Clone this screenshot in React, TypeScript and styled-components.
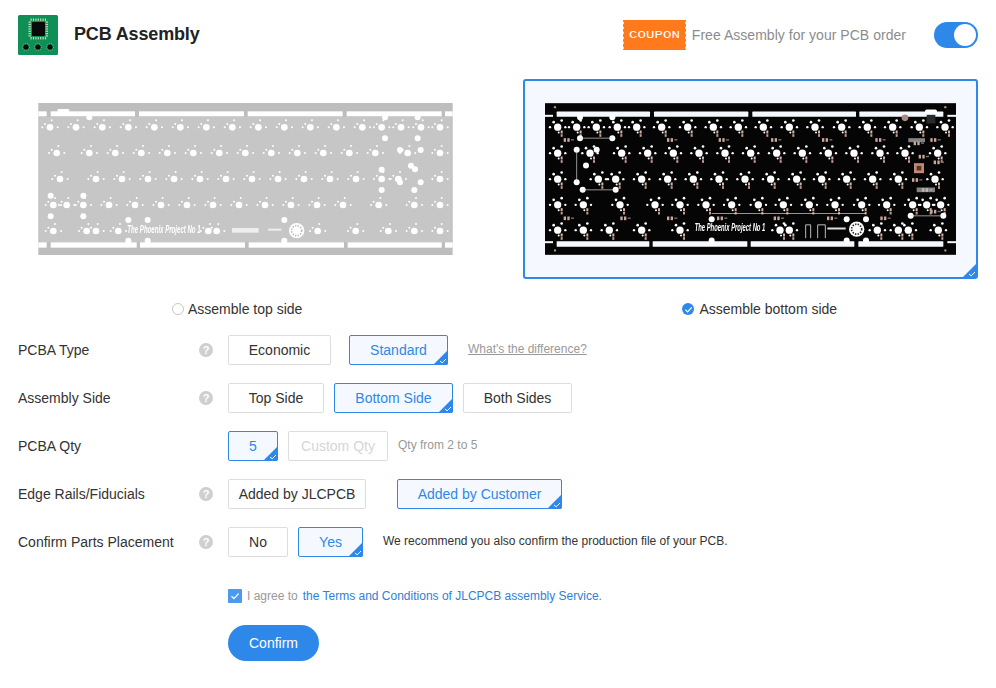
import styled, { createGlobalStyle } from 'styled-components'

const BLUE = '#2e88ea'

const GREY_KEYS: [number, number[]][] = [
  [110, [90, 168, 247, 325, 403, 481, 559, 637, 715, 793, 871, 949, 1027, 1085, 1143, 1203, 1260]],
  [187, [110, 208, 286, 364, 442, 520, 598, 676, 754, 832, 910, 988, 1066, 1163, 1260]],
  [265, [120, 228, 306, 384, 462, 540, 618, 696, 774, 852, 930, 1008, 1085, 1135, 1260]],
  [343, [100, 140, 190, 267, 345, 423, 501, 579, 657, 735, 813, 891, 969, 1076, 1183, 1260]],
  [421, [100, 200, 228, 295, 565, 590, 893, 1007, 1105, 1183, 1260]],
]

const GREY_HOLES = [
  [208, 80], [1095, 80], [1193, 80], [1095, 143], [1193, 143], [1140, 178], [1202, 178],
  [1173, 225], [1185, 236], [1085, 237], [1140, 275], [1202, 275], [1085, 298], [1183, 298],
  [92, 315], [190, 315], [92, 377], [190, 377], [325, 388], [383, 388], [793, 388],
  [325, 450], [383, 450], [793, 450],
]

const BLACK_KEYS: [number, number[]][] = [
  [157, [113, 170, 229, 292, 350, 425, 503, 580, 655, 730, 808, 885, 965, 1042, 1118, 1198, 1275]],
  [235, [113, 210, 305, 383, 460, 537, 615, 692, 770, 847, 925, 1002, 1080, 1155, 1253]],
  [313, [113, 235, 287, 365, 443, 520, 597, 675, 752, 830, 905, 980, 1058, 1135, 1245]],
  [390, [113, 190, 300, 405, 480, 558, 635, 715, 790, 868, 945, 1025, 1100, 1178, 1220, 1262]],
  [466, [113, 190, 268, 365, 480, 780, 808, 1072, 1135, 1165, 1255]],
]

const BLACK_HOLES = [
  [180, 127], [277, 127], [180, 190], [277, 190], [170, 225], [230, 225], [170, 322],
  [198, 272], [188, 345], [287, 345], [575, 433], [575, 497], [980, 433], [1038, 433],
  [980, 497], [1038, 497], [1172, 423], [1270, 423],
]

const TOP_SLOTS = [[110, 390], [402, 685], [697, 1008], [1018, 1270]]
const BOTTOM_SLOTS = [[110, 388], [398, 682], [692, 1003], [1015, 1270]]
const PCB_SPOTS = [
  [140, 195], [450, 195], [605, 195], [762, 195], [915, 195], [1075, 195], [1240, 195],
  [140, 430], [310, 430], [450, 430], [600, 430], [770, 430], [930, 430], [1090, 430],
  [1190, 205], [1205, 245], [1250, 262], [1185, 315], [1215, 345], [1240, 410],
]

const GlobalStyle = createGlobalStyle`
  html, body {
    margin: 0;
    background: #fff;
    font-family: "Liberation Sans", Arial, sans-serif;
  }
`

const Page = styled.div`
  width: 996px;
  height: 688px;
  box-sizing: border-box;
  padding: 15px 18px 0;
  overflow: hidden;
`

const Header = styled.header`
  display: flex;
  align-items: center;
  height: 40px;
`

const Title = styled.h1`
  margin: -2px 0 0 16px;
  font-size: 18px;
  font-weight: 700;
  letter-spacing: -0.15px;
  color: #222;
`

const Promo = styled.div`
  margin-left: auto;
  display: flex;
  align-items: center;
  gap: 5px;
  font-size: 14px;
  letter-spacing: 0.03px;
  color: #8c8c8c;
`

const Toggle = styled.span`
  display: flex;
  justify-content: flex-end;
  align-items: center;
  width: 44px;
  height: 26px;
  margin-left: 23px;
  padding: 0 2px;
  box-sizing: border-box;
  border-radius: 13px;
  background: ${BLUE};
`

const ToggleKnob = styled.span`
  width: 22px;
  height: 22px;
  border-radius: 50%;
  background: #fff;
`

const Panels = styled.div`
  display: flex;
  gap: 50px;
  margin-top: 24px;
`

const Panel = styled.div<{ $active?: boolean }>`
  position: relative;
  flex: 0 0 455px;
  height: 200px;
  box-sizing: border-box;
  display: flex;
  align-items: center;
  justify-content: center;
  border: 2px solid ${(p) => (p.$active ? BLUE : 'transparent')};
  border-radius: 3px;
  background: ${(p) => (p.$active ? '#f5f9ff' : 'transparent')};
`

const BoardArt = styled.svg`
  filter: blur(0.35px);
`

const SideChoices = styled.div`
  display: flex;
  margin-top: 21px;
  height: 18px;
`

const SideChoice = styled.label<{ $left: number }>`
  display: flex;
  align-items: center;
  gap: 4px;
  margin-left: ${(p) => p.$left}px;
  font-size: 14px;
  color: #333;
`

const RadioOff = styled.span`
  width: 10px;
  height: 10px;
  border: 1px solid #c8c8c8;
  border-radius: 50%;
  background: #fff;
`

const RadioOn = styled.span`
  display: flex;
  align-items: center;
  justify-content: center;
  width: 12px;
  height: 12px;
  margin-right: 1px;
  border-radius: 50%;
  background: ${BLUE};
`

const Form = styled.div`
  display: flex;
  flex-direction: column;
  gap: 18px;
  margin-top: 17px;
`

const Row = styled.div`
  display: flex;
  align-items: center;
  height: 30px;
`

const Label = styled.div`
  display: flex;
  justify-content: space-between;
  align-items: center;
  width: 195px;
  margin-right: 15px;
  font-size: 14px;
  color: #333;
`

const Help = styled.span`
  display: flex;
  align-items: center;
  justify-content: center;
  width: 14px;
  height: 14px;
  border-radius: 50%;
  background: #cfcfcf;
  color: #fff;
  font-size: 11px;
  font-weight: 700;
`

const Options = styled.div<{ $gap?: number }>`
  display: flex;
  gap: ${(p) => p.$gap ?? 10}px;
`

const Option = styled.span<{ $width: number; $active?: boolean; $disabled?: boolean }>`
  position: relative;
  width: ${(p) => p.$width}px;
  height: 30px;
  box-sizing: border-box;
  display: flex;
  align-items: center;
  justify-content: center;
  border: 1px solid ${(p) => (p.$active ? BLUE : '#ddd')};
  border-radius: 2px;
  font-size: 14px;
  color: ${(p) => (p.$active ? BLUE : p.$disabled ? '#d6d6d6' : '#333')};
  background: ${(p) => (p.$active ? '#f5f9ff' : '#fff')};
`

const CornerMark = styled.svg<{ $size: number }>`
  position: absolute;
  right: -1px;
  bottom: -1px;
  width: ${(p) => p.$size}px;
  height: ${(p) => p.$size}px;
`

const DifferenceLink = styled.a`
  margin: -3px 0 0 20px;
  font-size: 12px;
  color: #999;
  text-decoration: underline;
`

const Hint = styled.span<{ $dark?: boolean }>`
  margin: ${(p) => (p.$dark ? '-2px 0 0 20px' : '-3px 0 0 10px')};
  font-size: 12px;
  color: ${(p) => (p.$dark ? '#333' : '#999')};
`

const Agreement = styled.div`
  display: flex;
  align-items: center;
  margin: 32px 0 0 210px;
  height: 14px;
  font-size: 12px;
  color: #999;
`

const CheckBox = styled.span`
  display: flex;
  align-items: center;
  justify-content: center;
  width: 14px;
  height: 14px;
  margin-right: 5px;
  border-radius: 1px;
  background: #4a9bf0;
`

const AgreementLink = styled.a`
  margin-left: 5px;
  color: #2f80d8;
`

const ConfirmButton = styled.button`
  display: block;
  width: 91px;
  height: 36px;
  margin: 22px 0 0 210px;
  padding: 0;
  border: 0;
  border-radius: 18px;
  background: ${BLUE};
  color: #fff;
  font-family: inherit;
  font-size: 14px;
`

function Check({ size = 10 }: { size?: number }) {
  return (
    <svg width={size} height={size} viewBox="0 0 10 10">
      <path d="M1.5 5.2 4 7.6 8.6 2.6" fill="none" stroke="#fff" strokeWidth="1.3" />
    </svg>
  )
}

function Corner({ size = 15 }: { size?: number }) {
  return (
    <CornerMark $size={size} viewBox="0 0 15 15">
      <path d="M15 0V13a2 2 0 0 1-2 2H0Z" fill={BLUE} />
      <path d="M7 11 9.2 12.8 13 9" fill="none" stroke="#fff" strokeWidth="1" />
    </CornerMark>
  )
}

function Logo() {
  const pads = [0, 1, 2, 3, 4, 5, 6]
  return (
    <svg width="40" height="40" viewBox="0 0 40 40">
      <rect width="40" height="40" rx="1.5" fill="#0f8f56" />
      {pads.map((i) => (
        <g key={i} fill="#b9ddb0">
          <rect x={12.5 + i * 2.4} y="3.5" width="1.2" height="2.4" />
          <rect x={12.5 + i * 2.4} y="22" width="1.2" height="2.4" />
          <rect x="10.5" y={6.5 + i * 2.3} width="2.4" height="1.2" />
          <rect x="27.6" y={6.5 + i * 2.3} width="2.4" height="1.2" />
        </g>
      ))}
      <rect x="14" y="7" width="13" height="14" rx="1" fill="#0a0a0a" />
      {[8, 20, 32].map((x) => (
        <g key={x}>
          <circle cx={x} cy="32" r="2.6" fill="#0a0a0a" />
          <circle cx={x} cy="32" r="3.6" fill="none" stroke="#9ed4a4" strokeWidth="0.6" strokeDasharray="1 1.2" />
        </g>
      ))}
    </svg>
  )
}

function Coupon() {
  const bumps = [3, 8, 13, 18, 23, 28]
  return (
    <svg width="65" height="30" viewBox="0 0 65 30">
      <rect x="1" width="63" height="30" fill="#ff7a1c" />
      {bumps.map((y) => (
        <g key={y} fill="#fff">
          <circle cx="0.5" cy={y} r="1.4" />
          <circle cx="64.5" cy={y} r="1.4" />
        </g>
      ))}
      <text x="7" y="18" textLength="51" lengthAdjust="spacingAndGlyphs" fontFamily="Liberation Mono" fontSize="10" fill="#fff">
        COUPON
      </text>
    </svg>
  )
}

function GreyBoard() {
  return (
    <BoardArt width="415" height="152" viewBox="55 37 1243 456">
      <rect x="55" y="37" width="1243" height="456" fill="#bdbdbd" />
      {[[55, 80], [92, 345], [357, 672], [683, 968], [980, 1265], [1275, 1298]].map(([a, b]) => (
        <rect key={a} x={a} y="62" width={b - a} height="15" fill="#fff" />
      ))}
      {[[55, 80], [92, 350], [360, 675], [686, 972], [983, 1265], [1275, 1298]].map(([a, b]) => (
        <rect key={a} x={a} y="455" width={b - a} height="16" fill="#fff" />
      ))}
      <rect x="58" y="78" width="1237" height="376" rx="10" fill="#c6c6c6" />
      <rect x="112" y="55" width="36" height="9" rx="4" fill="#fff" />
      {GREY_KEYS.map(([y, xs]) =>
        xs.map((x) => (
          <g key={`${x}-${y}`} fill="#fff">
            <circle cx={x} cy={y} r="10" />
            <circle cx={x - 23} cy={y} r="3" />
            <circle cx={x - 15} cy={y - 10} r="3" />
            <circle cx={x + 5} cy={y - 21} r="3" />
            <circle cx={x + 23} cy={y} r="3" />
          </g>
        )),
      )}
      {GREY_HOLES.map(([x, y]) => (
        <circle key={`${x}-${y}`} cx={x} cy={y} r="9" fill="#fff" />
      ))}
      <text x="322" y="426" textLength="220" lengthAdjust="spacingAndGlyphs" fontFamily="Liberation Sans" fontStyle="italic" fontWeight="700" fontSize="32" fill="#fff">
        The Phoenix Project No 1
      </text>
      <rect x="636" y="412" width="80" height="14" fill="#eee" />
      <rect x="744" y="414" width="40" height="6" fill="#eee" />
      <circle cx="830" cy="420" r="23" fill="#fff" />
      <circle cx="830" cy="420" r="15" fill="none" stroke="#bbb" strokeWidth="5" strokeDasharray="4 4" />
    </BoardArt>
  )
}

function BlackBoard() {
  return (
    <BoardArt width="411" height="152" viewBox="75 85 1233 455">
      <rect x="75" y="85" width="1233" height="455" fill="#050505" />
      {TOP_SLOTS.map(([a, b]) => (
        <rect key={a} x={a} y="110" width={b - a} height="16" rx="2" fill="#f5f9ff" />
      ))}
      {BOTTOM_SLOTS.map(([a, b]) => (
        <rect key={a} x={a} y="499" width={b - a} height="17" rx="2" fill="#f5f9ff" />
      ))}
      <rect x="75" y="120" width="24" height="6" fill="#f5f9ff" />
      <rect x="1282" y="120" width="26" height="6" fill="#f5f9ff" />
      <rect x="75" y="499" width="24" height="6" fill="#f5f9ff" />
      <rect x="1282" y="499" width="26" height="6" fill="#f5f9ff" />
      <rect x="1215" y="104" width="36" height="12" rx="5" fill="#fff" />
      {[[105, 97], [1276, 97], [105, 527], [1276, 527]].map(([x, y]) => (
        <circle key={x * y} cx={x} cy={y} r="3.5" fill="#a98" />
      ))}
      {BLACK_KEYS.map(([y, xs]) =>
        xs.map((x) => (
          <g key={`${x}-${y}`}>
            <g fill="#fff">
              <circle cx={x} cy={y} r="11" />
              <circle cx={x - 23} cy={y} r="3.5" />
              <circle cx={x - 12} cy={y - 15} r="4" />
              <circle cx={x + 12} cy={y - 20} r="4" />
              <circle cx={x + 23} cy={y} r="3.5" />
              <circle cx={x + 3} cy={y + 16} r="3" />
            </g>
            <rect x={x + 9} y={y + 10} width="6" height="9" fill="#d9b3a6" />
            <rect x={x + 9} y={y + 21} width="6" height="8" fill="#c49a8c" />
          </g>
        )),
      )}
      {BLACK_HOLES.map(([x, y]) => (
        <circle key={`${x}-${y}`} cx={x} cy={y} r="9" fill="#fff" />
      ))}
      <path d="M180 190H277M170 225V322M188 345H287M575 416H1038M1172 423H1270" stroke="#ddd" strokeWidth="2" fill="none" />
      {PCB_SPOTS.map(([x, y]) => (
        <g key={`${x}-${y}`} fill="#c9a79b">
          <rect x={x - 9} y={y - 5} width="7" height="11" />
          <rect x={x + 2} y={y - 5} width="7" height="11" />
          <rect x={x + 13} y={y - 2} width="9" height="4" fill="#777" />
        </g>
      ))}
      <rect x="1182" y="265" width="30" height="30" fill="#c08a72" />
      <rect x="1190" y="273" width="14" height="14" fill="#5a3527" />
      <rect x="1165" y="190" width="50" height="12" fill="#bbb" opacity="0.7" />
      <rect x="1190" y="338" width="55" height="14" fill="#bbb" opacity="0.7" />
      <rect x="1220" y="120" width="26" height="26" fill="#2a2a2a" />
      <circle cx="1155" cy="129" r="10" fill="#a98a85" />
      <text x="524" y="470" textLength="212" lengthAdjust="spacingAndGlyphs" fontFamily="Liberation Sans" fontStyle="italic" fontWeight="700" fontSize="33" fill="#fff">
        The Phoenix Project No 1
      </text>
      <path d="M857 490V450H872V490M893 490V450H916V490" fill="none" stroke="#bbb" strokeWidth="3" />
      <rect x="922" y="458" width="55" height="6" fill="#ddd" />
      <circle cx="1010" cy="463" r="23" fill="#fff" />
      <circle cx="1010" cy="463" r="15" fill="none" stroke="#222" strokeWidth="5" strokeDasharray="4 4" />
    </BoardArt>
  )
}

export default function App() {
  return (
    <Page>
      <GlobalStyle />
      <Header>
        <Logo />
        <Title>PCB Assembly</Title>
        <Promo>
          <Coupon />
          Free Assembly for your PCB order
          <Toggle>
            <ToggleKnob />
          </Toggle>
        </Promo>
      </Header>

      <Panels>
        <Panel>
          <GreyBoard />
        </Panel>
        <Panel $active>
          <BlackBoard />
          <Corner />
        </Panel>
      </Panels>

      <SideChoices>
        <SideChoice $left={154}>
          <RadioOff />
          Assemble top side
        </SideChoice>
        <SideChoice $left={380}>
          <RadioOn>
            <Check size={9} />
          </RadioOn>
          Assemble bottom side
        </SideChoice>
      </SideChoices>

      <Form>
        <Row>
          <Label>
            PCBA Type
            <Help>?</Help>
          </Label>
          <Options $gap={18}>
            <Option $width={103}>Economic</Option>
            <Option $width={99} $active>
              Standard
              <Corner />
            </Option>
          </Options>
          <DifferenceLink>What's the difference?</DifferenceLink>
        </Row>
        <Row>
          <Label>
            Assembly Side
            <Help>?</Help>
          </Label>
          <Options>
            <Option $width={96}>Top Side</Option>
            <Option $width={119} $active>
              Bottom Side
              <Corner />
            </Option>
            <Option $width={109}>Both Sides</Option>
          </Options>
        </Row>
        <Row>
          <Label>PCBA Qty</Label>
          <Options>
            <Option $width={50} $active>
              5
              <Corner />
            </Option>
            <Option $width={100} $disabled>
              Custom Qty
            </Option>
          </Options>
          <Hint>Qty from 2 to 5</Hint>
        </Row>
        <Row>
          <Label>
            Edge Rails/Fiducials
            <Help>?</Help>
          </Label>
          <Options $gap={31}>
            <Option $width={138}>Added by JLCPCB</Option>
            <Option $width={165} $active>
              Added by Customer
              <Corner />
            </Option>
          </Options>
        </Row>
        <Row>
          <Label>
            Confirm Parts Placement
            <Help>?</Help>
          </Label>
          <Options>
            <Option $width={60}>No</Option>
            <Option $width={65} $active>
              Yes
              <Corner />
            </Option>
          </Options>
          <Hint $dark>We recommend you also confirm the production file of your PCB.</Hint>
        </Row>
      </Form>

      <Agreement>
        <CheckBox>
          <Check />
        </CheckBox>
        I agree to
        <AgreementLink>the Terms and Conditions of JLCPCB assembly Service.</AgreementLink>
      </Agreement>
      <ConfirmButton>Confirm</ConfirmButton>
    </Page>
  )
}
